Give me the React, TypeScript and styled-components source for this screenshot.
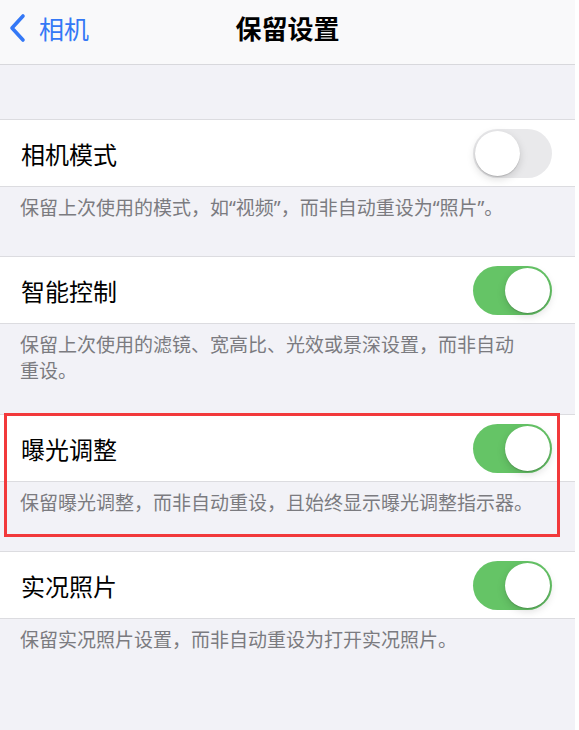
import React from 'react';
import styled, { createGlobalStyle } from 'styled-components';

const GlobalStyle = createGlobalStyle`
  html, body, #root {
    margin: 0;
    padding: 0;
    min-height: 100%;
  }
  body {
    background: #ffffff;
    font-family: "Noto Sans", "Noto Sans CJK SC", "Liberation Sans", sans-serif;
    -webkit-font-smoothing: antialiased;
  }
`;

const Page = styled.div`
  width: calc(100% - 4px);
  min-height: 100vh;
  background: #f2f2f7;
`;

const NavBar = styled.div`
  box-sizing: border-box;
  height: 65px;
  padding-bottom: 8px;
  display: grid;
  grid-template-columns: 1fr auto 1fr;
  align-items: center;
  background: #f9f9fa;
  border-bottom: 1px solid #d8d8dc;
`;

const Back = styled.div`
  display: flex;
  align-items: center;
  gap: 13px;
  padding-left: 8px;
  color: #3478f6;
  font-size: 25px;
`;

const Title = styled.div`
  font-size: 26px;
  font-weight: 700;
  color: #000;
`;

const Spacer = styled.div`
  height: 54px;
`;

const Section = styled.div`
  position: relative;
`;

const Row = styled.div`
  box-sizing: border-box;
  height: 68px;
  display: flex;
  align-items: center;
  justify-content: space-between;
  padding: 0 23px 0 21px;
  background: #ffffff;
  border-top: 1px solid #dcdce0;
  border-bottom: 1px solid #dcdce0;
`;

const Label = styled.span`
  font-size: 24px;
  color: #000;
  padding-top: 1px;
`;

const Track = styled.div<{ $on: boolean }>`
  box-sizing: border-box;
  width: 79px;
  height: 49px;
  border-radius: 25px;
  padding: 2px;
  display: flex;
  justify-content: ${(p) => (p.$on ? 'flex-end' : 'flex-start')};
  background: ${(p) => (p.$on ? '#65c466' : '#e9e9eb')};
`;

const Knob = styled.div`
  width: 45px;
  height: 45px;
  border-radius: 50%;
  background: #ffffff;
  box-shadow: 0 3px 8px rgba(0, 0, 0, 0.15), 0 1px 1px rgba(0, 0, 0, 0.16);
`;

const Footer = styled.div`
  box-sizing: border-box;
  min-height: 69px;
  padding: 8px 20px 30px 20px;
  font-size: 19px;
  line-height: 26px;
  color: #7b7b80;
`;

const Highlight = styled.div`
  position: absolute;
  top: -1px;
  left: 4px;
  width: 556px;
  height: 124px;
  box-sizing: border-box;
  border: 3px solid #f2393b;
  pointer-events: none;
`;

const Toggle = ({ on }: { on: boolean }) => (
  <Track $on={on}>
    <Knob />
  </Track>
);

type Item = {
  label: string;
  on: boolean;
  footer: React.ReactNode;
  marked?: boolean;
};

const items: Item[] = [
  {
    label: '相机模式',
    on: false,
    footer: '保留上次使用的模式，如“视频”，而非自动重设为“照片”。',
  },
  {
    label: '智能控制',
    on: true,
    footer: (
      <>
        保留上次使用的滤镜、宽高比、光效或景深设置，而非自动
        <br />
        重设。
      </>
    ),
  },
  {
    label: '曝光调整',
    on: true,
    footer: '保留曝光调整，而非自动重设，且始终显示曝光调整指示器。',
    marked: true,
  },
  {
    label: '实况照片',
    on: true,
    footer: '保留实况照片设置，而非自动重设为打开实况照片。',
  },
];

const App = () => (
  <React.Fragment>
    <GlobalStyle />
    <Page>
      <NavBar>
        <Back>
          <svg width="18" height="30" viewBox="0 0 18 30" fill="none">
            <path
              d="M15 3 L4 15 L15 27"
              stroke="#3478f6"
              strokeWidth="3.6"
              strokeLinecap="round"
              strokeLinejoin="round"
            />
          </svg>
          <span>相机</span>
        </Back>
        <Title>保留设置</Title>
        <div />
      </NavBar>
      <Spacer />
      {items.map((item) => (
        <Section key={item.label}>
          <Row>
            <Label>{item.label}</Label>
            <Toggle on={item.on} />
          </Row>
          <Footer>{item.footer}</Footer>
          {item.marked && <Highlight />}
        </Section>
      ))}
    </Page>
  </React.Fragment>
);

export default App;
